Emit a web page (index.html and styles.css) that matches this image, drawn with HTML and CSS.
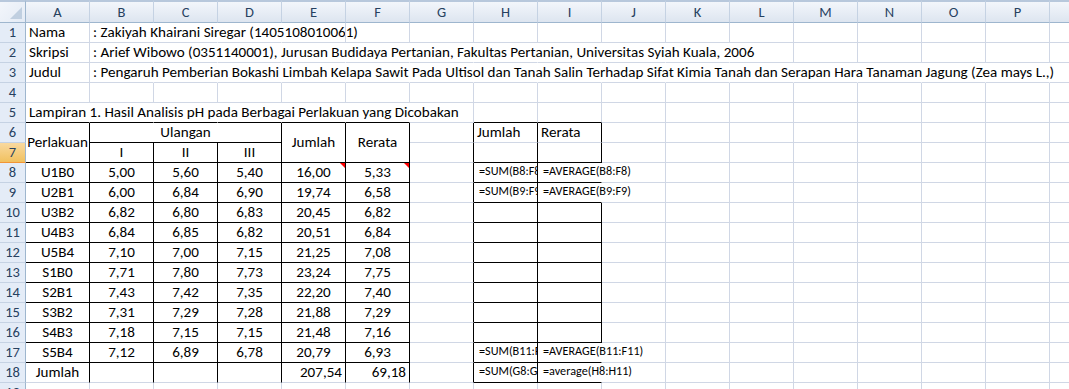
FILE: index.html
```html
<!DOCTYPE html>
<html>
<head>
<meta charset="utf-8">
<link rel="stylesheet" href="styles.css">
</head>
<body>
<div class="sheet">
  <i class="corner"></i>
  <i class="ch">A</i><i class="ch">B</i><i class="ch">C</i><i class="ch">D</i><i class="ch">E</i><i class="ch">F</i><i class="ch">G</i><i class="ch">H</i><i class="ch">I</i><i class="ch">J</i><i class="ch">K</i><i class="ch">L</i><i class="ch">M</i><i class="ch">N</i><i class="ch">O</i><i class="ch">P</i><i class="ch">Q</i>

  <i class="rh">1</i>
  <i>Nama</i><i class="nr">: Zakiyah Khairani Siregar (1405108010061)</i><i class="nr"></i><i class="nr"></i><i></i><i></i><i></i><i></i><i></i><i></i><i></i><i></i><i></i><i></i><i></i><i></i><i></i>

  <i class="rh">2</i>
  <i>Skripsi</i><i class="nr">: Arief Wibowo (0351140001), Jurusan Budidaya Pertanian, Fakultas Pertanian, Universitas Syiah Kuala, 2006</i><i class="nr"></i><i class="nr"></i><i class="nr"></i><i class="nr"></i><i class="nr"></i><i class="nr"></i><i class="nr"></i><i class="nr"></i><i class="nr"></i><i></i><i></i><i></i><i></i><i></i><i></i>

  <i class="rh">3</i>
  <i>Judul</i><i class="nr">: Pengaruh Pemberian Bokashi Limbah Kelapa Sawit Pada Ultisol dan Tanah Salin Terhadap Sifat Kimia Tanah dan Serapan Hara Tanaman Jagung (Zea mays L.,)</i><i class="nr"></i><i class="nr"></i><i class="nr"></i><i class="nr"></i><i class="nr"></i><i class="nr"></i><i class="nr"></i><i class="nr"></i><i class="nr"></i><i class="nr"></i><i class="nr"></i><i class="nr"></i><i class="nr"></i><i class="nr"></i><i></i>

  <i class="rh">4</i>
  <i></i><i></i><i></i><i></i><i></i><i></i><i></i><i></i><i></i><i></i><i></i><i></i><i></i><i></i><i></i><i></i><i></i>

  <i class="rh">5</i>
  <i class="nr b">Lampiran 1. Hasil Analisis pH pada Berbagai Perlakuan yang Dicobakan</i><i class="nr b"></i><i class="nr b"></i><i class="nr b"></i><i class="nr b"></i><i class="nr b"></i><i></i><i class="b"></i><i class="b"></i><i></i><i></i><i></i><i></i><i></i><i></i><i></i><i></i>

  <i class="rh">6</i>
  <i class="r b mid span-r">Perlakuan</i><i class="r b ctr span-c3">Ulangan</i><i class="r b mid span-r">Jumlah</i><i class="r b mid span-r">Rerata</i><i class="r"></i><i class="r">Jumlah</i><i class="r">Rerata</i><i></i><i></i><i></i><i></i><i></i><i></i><i></i><i></i>

  <i class="rh sel">7</i>
  <i class="r b ctr">I</i><i class="r b ctr">II</i><i class="r b ctr">III</i><i class="r"></i><i class="r b"></i><i class="r b"></i><i></i><i></i><i></i><i></i><i></i><i></i><i></i><i></i>

  <i class="rh">8</i>
  <i class="r b ctr">U1B0</i><i class="r b ctr">5,00</i><i class="r b ctr">5,60</i><i class="r b ctr">5,40</i><i class="r b ctr note">16,00</i><i class="r b ctr note">5,33</i><i class="r"></i><i class="r b f clip">=SUM(B8:F8)</i><i class="nr b f">=AVERAGE(B8:F8)</i><i></i><i></i><i></i><i></i><i></i><i></i><i></i><i></i>

  <i class="rh">9</i>
  <i class="r b ctr">U2B1</i><i class="r b ctr">6,00</i><i class="r b ctr">6,84</i><i class="r b ctr">6,90</i><i class="r b ctr">19,74</i><i class="r b ctr">6,58</i><i class="r"></i><i class="r b f clip">=SUM(B9:F9)</i><i class="nr b f">=AVERAGE(B9:F9)</i><i></i><i></i><i></i><i></i><i></i><i></i><i></i><i></i>

  <i class="rh">10</i>
  <i class="r b ctr">U3B2</i><i class="r b ctr">6,82</i><i class="r b ctr">6,80</i><i class="r b ctr">6,83</i><i class="r b ctr">20,45</i><i class="r b ctr">6,82</i><i class="r"></i><i class="r b"></i><i class="r b"></i><i></i><i></i><i></i><i></i><i></i><i></i><i></i><i></i>

  <i class="rh">11</i>
  <i class="r b ctr">U4B3</i><i class="r b ctr">6,84</i><i class="r b ctr">6,85</i><i class="r b ctr">6,82</i><i class="r b ctr">20,51</i><i class="r b ctr">6,84</i><i class="r"></i><i class="r b"></i><i class="r b"></i><i></i><i></i><i></i><i></i><i></i><i></i><i></i><i></i>

  <i class="rh">12</i>
  <i class="r b ctr">U5B4</i><i class="r b ctr">7,10</i><i class="r b ctr">7,00</i><i class="r b ctr">7,15</i><i class="r b ctr">21,25</i><i class="r b ctr">7,08</i><i class="r"></i><i class="r b"></i><i class="r b"></i><i></i><i></i><i></i><i></i><i></i><i></i><i></i><i></i>

  <i class="rh">13</i>
  <i class="r b ctr">S1B0</i><i class="r b ctr">7,71</i><i class="r b ctr">7,80</i><i class="r b ctr">7,73</i><i class="r b ctr">23,24</i><i class="r b ctr">7,75</i><i class="r"></i><i class="r b"></i><i class="r b"></i><i></i><i></i><i></i><i></i><i></i><i></i><i></i><i></i>

  <i class="rh">14</i>
  <i class="r b ctr">S2B1</i><i class="r b ctr">7,43</i><i class="r b ctr">7,42</i><i class="r b ctr">7,35</i><i class="r b ctr">22,20</i><i class="r b ctr">7,40</i><i class="r"></i><i class="r b"></i><i class="r b"></i><i></i><i></i><i></i><i></i><i></i><i></i><i></i><i></i>

  <i class="rh">15</i>
  <i class="r b ctr">S3B2</i><i class="r b ctr">7,31</i><i class="r b ctr">7,29</i><i class="r b ctr">7,28</i><i class="r b ctr">21,88</i><i class="r b ctr">7,29</i><i class="r"></i><i class="r b"></i><i class="r b"></i><i></i><i></i><i></i><i></i><i></i><i></i><i></i><i></i>

  <i class="rh">16</i>
  <i class="r b ctr">S4B3</i><i class="r b ctr">7,18</i><i class="r b ctr">7,15</i><i class="r b ctr">7,15</i><i class="r b ctr">21,48</i><i class="r b ctr">7,16</i><i class="r"></i><i class="r b"></i><i class="r b"></i><i></i><i></i><i></i><i></i><i></i><i></i><i></i><i></i>

  <i class="rh">17</i>
  <i class="r b ctr">S5B4</i><i class="r b ctr">7,12</i><i class="r b ctr">6,89</i><i class="r b ctr">6,78</i><i class="r b ctr">20,79</i><i class="r b ctr">6,93</i><i class="r"></i><i class="r b f clip">=SUM(B11:F11)</i><i class="nr b f">=AVERAGE(B11:F11)</i><i></i><i></i><i></i><i></i><i></i><i></i><i></i><i></i>

  <i class="rh">18</i>
  <i class="r ctr">Jumlah</i><i class="r"></i><i class="r"></i><i class="r"></i><i class="r rt">207,54</i><i class="r rt">69,18</i><i class="r"></i><i class="r b f clip">=SUM(G8:G11)</i><i class="nr b f">=average(H8:H11)</i><i></i><i></i><i></i><i></i><i></i><i></i><i></i><i></i>

  <i class="rh">19</i>
  <i></i><i></i><i></i><i></i><i></i><i></i><i></i><i></i><i></i><i></i><i></i><i></i><i></i><i></i><i></i><i></i><i></i>
</div>
</body>
</html>
```

FILE: styles.css
```css
html, body {
  margin: 0;
  padding: 0;
  background: #ffffff;
}

body {
  width: 1069px;
  height: 389px;
  overflow: hidden;
  font-family: Calibri, Carlito, Lato, "Liberation Sans", sans-serif;
  font-size: 15.1px;
  color: #000000;
}

.sheet {
  display: grid;
  grid-template-columns: 26px repeat(17, 64px);
  grid-template-rows: 23px repeat(19, 20px);
}

.sheet > i {
  font-style: normal;
  box-sizing: border-box;
  border-right: 1px solid #d0d7e5;
  border-bottom: 1px solid #d0d7e5;
  white-space: nowrap;
  display: flex;
  align-items: flex-end;
  justify-content: flex-start;
  padding: 0 3px 1px 3px;
  line-height: 17px;
  min-width: 0;
  position: relative;
}

.sheet > .corner {
  background: linear-gradient(135deg, #f3f6fb 0%, #e4ebf5 100%);
  border-right: 1px solid #9eb6ce;
  border-bottom: 1px solid #9eb6ce;
  border-top: 2px solid #b8c8dc;
}

.sheet > .corner::after {
  content: "";
  position: absolute;
  right: 3px;
  bottom: 3px;
  width: 0;
  height: 0;
  border-left: 12px solid transparent;
  border-bottom: 12px solid #c0cfe0;
}

.sheet > .ch {
  background: linear-gradient(#f3f6fb, #dde5f0);
  border-top: 2px solid #b8c8dc;
  border-right: 1px solid #c5d2e3;
  border-bottom: 1px solid #9eb6ce;
  color: #27415f;
  justify-content: center;
  align-items: center;
  padding: 0;
  font-size: 14.5px;
}

.sheet > .rh {
  background: #e4ecf7;
  border-right: 1px solid #9eb6ce;
  border-bottom: 1px solid #c5d2e3;
  color: #27415f;
  justify-content: center;
  align-items: center;
  padding: 0;
  font-size: 14.5px;
}

.sheet > .rh.sel {
  background: linear-gradient(#f9d99f, #f1c15f);
  border-bottom: 1px solid #f29536;
}

.sheet > .nr {
  border-right-color: transparent;
}

.sheet > .r {
  border-right-color: #000000;
}

.sheet > .b {
  border-bottom-color: #000000;
}

.sheet > .ctr {
  justify-content: center;
}

.sheet > .mid {
  justify-content: center;
  align-items: center;
  padding-bottom: 0;
}

.sheet > .rt {
  justify-content: flex-end;
}

.sheet > .span-r {
  grid-row: span 2;
}

.sheet > .span-c3 {
  grid-column: span 3;
}

.sheet > .f {
  font-size: 12.2px;
  padding-left: 5px;
  padding-bottom: 3px;
}

.sheet > .clip {
  overflow: hidden;
}

.sheet > .note::after {
  content: "";
  position: absolute;
  top: 0;
  right: 0;
  width: 0;
  height: 0;
  border-left: 5px solid transparent;
  border-top: 5px solid #ff0000;
}
```
